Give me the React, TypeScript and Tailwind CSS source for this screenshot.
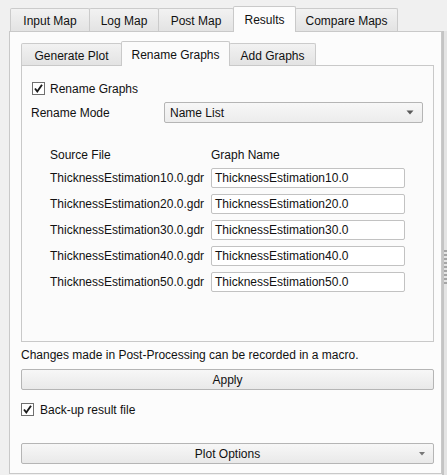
import React from "react";

const Check = () => (
  <div className="w-[13px] h-[13px] border border-[#6f6f6f] bg-white flex items-center justify-center shrink-0">
    <svg width="11" height="11" viewBox="0 0 11 11">
      <path d="M2 5.5 L4.3 8.5 L9 1.8" fill="none" stroke="#1a1a1a" strokeWidth="1.9" />
    </svg>
  </div>
);

const Arrow = () => (
  <svg width="8" height="5" viewBox="0 0 8 5">
    <path d="M0.5 0.5 L7.5 0.5 L4 4.5 Z" fill="#5a5a5a" />
  </svg>
);

const OuterTab = ({ label, w }: { label: string; w: string }) => (
  <div className={`${w} h-[23px] bg-gradient-to-b from-[#f2f2f2] to-[#e3e3e3] border border-b-0 border-[#cbcbcb] rounded-t-[2px] flex items-start justify-center pt-[6px] -ml-px first:ml-0`}>
    {label}
  </div>
);

const rows = ["10.0", "20.0", "30.0", "40.0", "50.0"];

export default function App() {
  return (
    <div className="w-[447px] h-[475px] bg-[#f0f0f0] overflow-hidden flex font-['Liberation_Sans',Arial,sans-serif] text-[12px] text-[#111] leading-none">
      <div className="w-[442px] flex flex-col">
        {/* outer tabs */}
        <div className="h-[31px] flex items-end pl-[10px]">
          <OuterTab label="Input Map" w="w-[80px]" />
          <OuterTab label="Log Map" w="w-[70px]" />
          <OuterTab label="Post Map" w="w-[76px]" />
          <div className="w-[63px] h-[26px] -mb-px -ml-px relative z-10 bg-[#fcfcfc] border border-b-0 border-[#c9c9c9] rounded-t-[2px] flex items-start justify-center pt-[7px]">
            Results
          </div>
          <div className="w-[103px] h-[23px] -ml-px bg-gradient-to-b from-[#f2f2f2] to-[#e3e3e3] border border-b-0 border-[#cbcbcb] rounded-t-[2px] flex items-start justify-center pt-[6px]">
            Compare Maps
          </div>
        </div>
        {/* outer panel */}
        <div className="ml-[9px] w-[433px] h-[443px] border border-[#c9c9c9] bg-[#fcfcfc] pt-[9px] pl-[11px] flex flex-col">
          {/* inner tabs */}
          <div className="h-[24px] flex items-end">
            <div className="w-[101px] h-[22px] bg-gradient-to-b from-[#f2f2f2] to-[#e3e3e3] border border-b-0 border-[#cbcbcb] rounded-t-[2px] flex items-start justify-center pt-[6px]">
              Generate Plot
            </div>
            <div className="w-[109px] h-[25px] -mb-px -ml-px relative z-10 bg-[#fbfbfb] border border-b-0 border-[#c9c9c9] rounded-t-[2px] flex items-start justify-center pt-[7px]">
              Rename Graphs
            </div>
            <div className="w-[87px] h-[22px] -ml-px bg-gradient-to-b from-[#f2f2f2] to-[#e3e3e3] border border-b-0 border-[#cbcbcb] rounded-t-[2px] flex items-start justify-center pt-[6px]">
              Add Graphs
            </div>
          </div>
          <div className="w-[413px] h-[277px] border border-[#c9c9c9] bg-[#fbfbfb] pl-[10px] pt-[16px] flex flex-col">
            <div className="h-[13px] flex items-center gap-[5px]">
              <Check />
              <span>Rename Graphs</span>
            </div>
            <div className="mt-[7px] h-[21px] flex items-center">
              <span className="w-[133px] -ml-px">Rename Mode</span>
              <div className="w-[259px] h-[21px] border border-[#b5b5b5] rounded-[2px] bg-gradient-to-b from-[#f7f7f7] to-[#ececec] flex items-center justify-between pl-[5px] pr-[8px]">
                <span>Name List</span>
                <Arrow />
              </div>
            </div>
            <div className="mt-[24px] h-[16px] flex items-center pl-[18px]">
              <span className="w-[161px]">Source File</span>
              <span>Graph Name</span>
            </div>
            <div className="mt-[5px] flex flex-col gap-[6px] pl-[18px]">
              {rows.map((r) => (
                <div key={r} className="h-[20px] flex items-center">
                  <span className="w-[161px]">{`ThicknessEstimation${r}.gdr`}</span>
                  <div className="w-[194px] h-[20px] border border-[#c2c2c2] rounded-[2px] bg-white flex items-center pl-[3px]">
                    {`ThicknessEstimation${r}`}
                  </div>
                </div>
              ))}
            </div>
          </div>
          <div className="mt-[5px] h-[16px] flex items-center">
            Changes made in Post-Processing can be recorded in a macro.
          </div>
          <div className="mt-[6px] w-[413px] h-[21px] border border-[#b5b5b5] rounded-[2px] bg-gradient-to-b from-[#f7f7f7] to-[#e9e9e9] flex items-center justify-center">
            Apply
          </div>
          <div className="mt-[13px] h-[13px] flex items-center gap-[6px]">
            <Check />
            <span>Back-up result file</span>
          </div>
          <div className="mt-[27px] w-[413px] h-[21px] border border-[#b5b5b5] rounded-[2px] bg-gradient-to-b from-[#f7f7f7] to-[#e9e9e9] flex items-center relative">
            <span className="flex-1 text-center">Plot Options</span>
            <div className="absolute right-[8px] top-[8px]">
              <svg width="6" height="4" viewBox="0 0 6 4">
                <path d="M0 0 L6 0 L3 3.5 Z" fill="#777" />
              </svg>
            </div>
          </div>
        </div>
      </div>
      {/* splitter strip */}
      <div className="mt-[31px] w-[5px] h-[444px] bg-[#e4e4e4] border-l-2 border-[#c4c4c4] flex flex-col items-center justify-center">
        <div className="flex flex-col gap-[2px] mt-[28px]">
          {Array.from({ length: 9 }).map((_, i) => (
            <div key={i} className="w-[3px] h-[2px] bg-[#a5a5a5]" />
          ))}
        </div>
      </div>
    </div>
  );
}
